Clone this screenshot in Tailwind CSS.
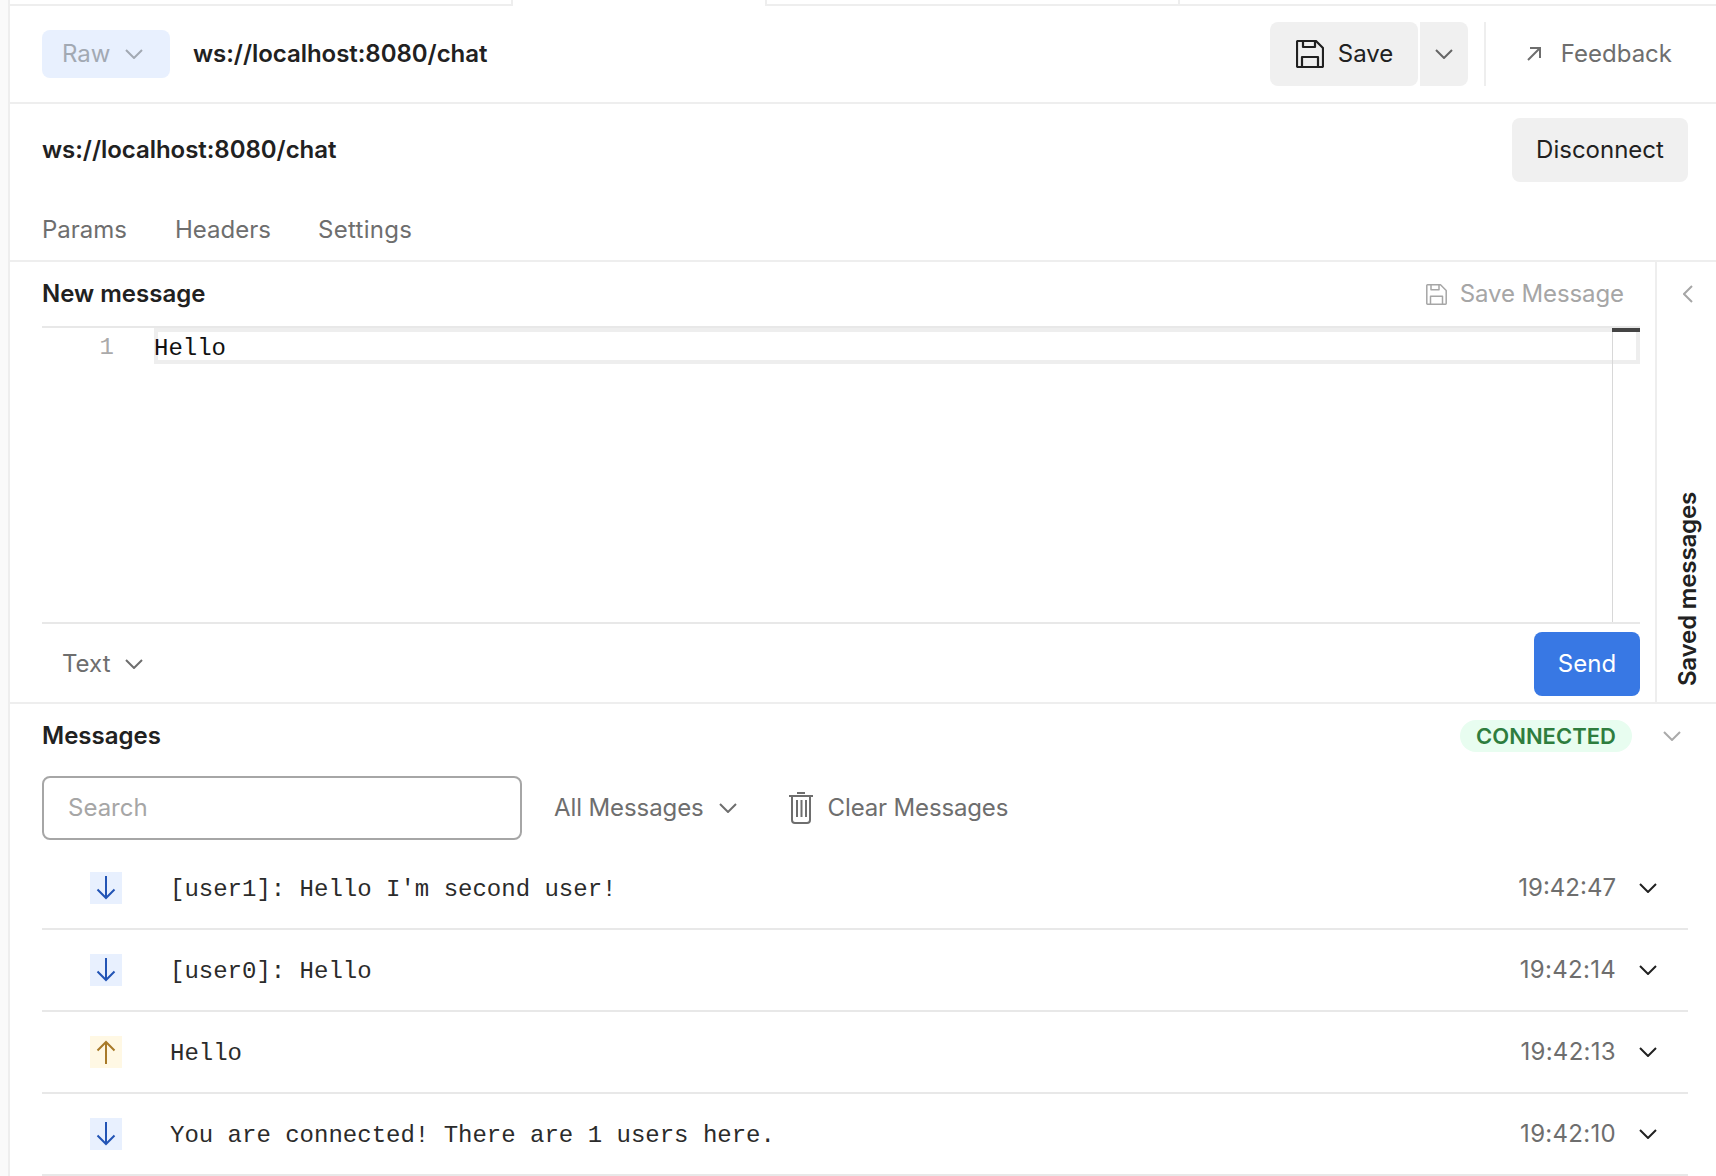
<!DOCTYPE html>
<html lang="en">
<head>
    <meta charset="UTF-8">
    <meta name="viewport" content="width=device-width, initial-scale=1.0">
    <script src="https://cdn.jsdelivr.net/npm/@tailwindcss/browser@4"></script>
    <title>WebSocket Request</title>
</head>
<body class="bg-white overflow-hidden">
    <div class="flex h-[1176px] w-[1716px] overflow-hidden font-['Inter',sans-serif] text-[24px] text-[#212121]">
        <!-- left rail -->
        <div class="w-[10px] shrink-0 bg-[#fafafa] border-r-2 border-[#eeeeee]"></div>

        <div class="flex-1 min-w-0 flex flex-col">
            <!-- tab strip -->
            <div class="flex h-[6px] shrink-0">
                <div class="w-[503px] border-b-2 border-r-2 border-[#eeeeee]"></div>
                <div class="w-[252px]"></div>
                <div class="w-[415px] border-b-2 border-l-2 border-r-2 border-[#eeeeee]"></div>
                <div class="flex-1 border-b-2 border-[#eeeeee]"></div>
            </div>

            <!-- request bar -->
            <div class="flex items-center h-[98px] shrink-0 pl-[32px] pr-[44px] border-b-2 border-[#eeeeee]">
                <button class="flex items-center gap-[15px] w-[128px] h-[48px] pl-[20px] rounded-[8px] bg-[#e8f0fe] text-[#a2a9b3]">
                    Raw
                    <svg class="w-[18px] h-[10px]" viewBox="0 0 18 10" fill="none" stroke="#a2a9b3" stroke-width="2"><path d="M1 1l8 8 8-8"/></svg>
                </button>
                <div class="ml-[23px] font-semibold tracking-[-0.04px]">ws://localhost:8080/chat</div>
                <div class="ml-auto flex items-center h-[64px]">
                    <button class="flex items-center gap-[14px] w-[148px] h-full pl-[26px] rounded-[8px] bg-[#f0f0f0]">
                        <svg class="w-[28px] h-[28px]" viewBox="0 0 28 28" fill="none" stroke="#212121" stroke-width="2.200" stroke-linejoin="round"><path d="M2 1h18l7 7v18a1 1 0 0 1-1 1H2a1 1 0 0 1-1-1V2a1 1 0 0 1 1-1z"/><path d="M7 1v6h12V1"/><path d="M6 27V17h16v10"/></svg>
                        Save
                    </button>
                    <button class="flex items-center justify-center w-[48px] h-full ml-[2px] rounded-r-[8px] bg-[#f0f0f0]">
                        <svg class="w-[18px] h-[10px]" viewBox="0 0 18 10" fill="none" stroke="#666666" stroke-width="2"><path d="M1 1l8 8 8-8"/></svg>
                    </button>
                    <div class="w-[2px] h-full ml-[16px] bg-[#eeeeee]"></div>
                    <button class="flex items-center gap-[20px] ml-[41px] text-[#6e6e6e]">
                        <svg class="w-[14px] h-[14px]" viewBox="0 0 14 14" fill="none" stroke="#6e6e6e" stroke-width="2"><path d="M1 13L13 1M3 1h10v10"/></svg>
                        Feedback
                    </button>
                </div>
            </div>

            <!-- url + tabs -->
            <div class="h-[158px] shrink-0 px-[32px] pr-[28px] pt-[14px] border-b-2 border-[#eeeeee]">
                <div class="flex items-center justify-between h-[64px]">
                    <div class="font-semibold tracking-[-0.04px]">ws://localhost:8080/chat</div>
                    <button class="w-[176px] h-[64px] rounded-[8px] bg-[#f0f0f0]">Disconnect</button>
                </div>
                <div class="flex mt-[32px] leading-[32px] text-[#6e6e6e]">
                    <span>Params</span>
                    <span class="ml-[48px]">Headers</span>
                    <span class="ml-[47px] tracking-[0.3px]">Settings</span>
                </div>
            </div>

            <!-- new message -->
            <div class="flex h-[442px] shrink-0 border-b-2 border-[#eeeeee]">
                <div class="flex-1 min-w-0 flex flex-col pl-[32px] pr-[15px]">
                    <div class="flex items-center justify-between h-[64px] shrink-0 pr-[16px]">
                        <div class="font-semibold">New message</div>
                        <div class="flex items-center gap-[13px] text-[#a6a6a6] tracking-[-0.1px]">
                            <svg class="w-[21px] h-[21px]" viewBox="0 0 21 21" fill="none" stroke="#a6a6a6" stroke-width="1.5" stroke-linejoin="round"><path d="M1.5.8h13l5.700 5.700v13a.7.7 0 0 1-.7.7H1.500a.7.7 0 0 1-.7-.7V1.500a.7.7 0 0 1 .7-.7z"/><path d="M5 .8v5h8v-5"/><path d="M4.500 20.200v-8h12v8"/></svg>
                            Save Message
                        </div>
                    </div>
                    <!-- editor -->
                    <div class="relative flex-1 flex border-t-2 border-b-2 border-[#e8e8e8] font-['Liberation_Mono',monospace]">
                        <div class="absolute left-[112px] right-0 top-0 h-[36px] border-4 border-[#eeeeee]"></div>
                        <div class="absolute right-[27px] top-0 bottom-0 w-px bg-[#d8d8d8]"></div>
                        <div class="absolute right-0 top-0 w-[28px] h-[4px] bg-[#444444]"></div>
                        <div class="relative w-[72px] text-right leading-[36px] text-[#aaaaaa] mt-[2px]">1</div>
                        <div class="relative ml-[40px] leading-[36px] text-[#111111] mt-[3px]">Hello</div>
                    </div>
                    <div class="flex items-start justify-between h-[78px] shrink-0 pt-[8px]">
                        <button class="flex items-center gap-[14px] h-[64px] pl-[20px] text-[#6e6e6e]">
                            Text
                            <svg class="w-[18px] h-[10px]" viewBox="0 0 18 10" fill="none" stroke="#6e6e6e" stroke-width="2"><path d="M1 1l8 8 8-8"/></svg>
                        </button>
                        <button class="w-[106px] h-[64px] rounded-[8px] bg-[#3878e4] text-white">Send</button>
                    </div>
                </div>
                <!-- saved messages rail -->
                <div class="w-[61px] shrink-0 flex flex-col items-center border-l-2 border-[#eeeeee] pl-[3px] pb-[16px]">
                    <svg class="w-[10px] h-[18px] mt-[23px]" viewBox="0 0 10 18" fill="none" stroke="#a6a6a6" stroke-width="2"><path d="M9 1L1 9l8 8"/></svg>
                    <div class="mt-auto font-semibold leading-[28px] tracking-[-0.15px] [writing-mode:vertical-rl] rotate-180">Saved messages</div>
                </div>
            </div>

            <!-- messages -->
            <div class="flex-1 min-h-0 pl-[32px] pr-[28px]">
                <div class="flex items-center h-[64px]">
                    <div class="font-semibold">Messages</div>
                    <div class="ml-auto flex items-center justify-center w-[172px] h-[32px] rounded-full bg-[#e8fdf0] text-[#2e7d3e] text-[22px] font-semibold">CONNECTED</div>
                    <svg class="w-[18px] h-[10px] ml-[31px] mr-[7px]" viewBox="0 0 18 10" fill="none" stroke="#aaaaaa" stroke-width="2"><path d="M1 1l8 8 8-8"/></svg>
                </div>
                <div class="flex items-center h-[64px] mt-[8px]">
                    <div class="flex items-center w-[480px] h-[64px] pl-[24px] border-2 border-[#a6a6a6] rounded-[8px] text-[#a6a6a6]">Search</div>
                    <button class="flex items-center gap-[15px] ml-[32px] text-[#6e6e6e] tracking-[-0.1px]">
                        All Messages
                        <svg class="w-[18px] h-[10px]" viewBox="0 0 18 10" fill="none" stroke="#6e6e6e" stroke-width="2"><path d="M1 1l8 8 8-8"/></svg>
                    </button>
                    <button class="flex items-center gap-[15px] ml-[52px] text-[#6e6e6e] tracking-[-0.15px]">
                        <svg class="w-[24px] h-[32px]" viewBox="0 0 24 32" fill="none" stroke="#6e6e6e" stroke-width="2" stroke-linecap="butt"><path d="M8 1h8M0 4h24"/><path d="M3 4v24a3 3 0 0 0 3 3h12a3 3 0 0 0 3-3V4"/><path d="M8 8v17M12.500 8v17M17 8v17"/></svg>
                        Clear Messages
                    </button>
                </div>

                <div class="mt-[8px]">
                    <div class="flex items-center h-[82px] pl-[48px] border-b-2 border-[#e8e8e8]">
                        <div class="flex items-center justify-center w-[32px] h-[32px] bg-[#e8f0fe]">
                            <svg class="w-[20px] h-[24px]" viewBox="0 0 20 24" fill="none" stroke="#2254b5" stroke-width="2"><path d="M10 0v22M1.500 13.500L10 22l8.500-8.500"/></svg>
                        </div>
                        <div class="ml-[48px] pt-[3px] font-['Liberation_Mono',monospace] text-[#2b2b2b]">[user1]: Hello I'm second user!</div>
                        <div class="ml-auto text-[#6e6e6e]">19:42:47</div>
                        <svg class="w-[18px] h-[10px] ml-[23px] mr-[31px]" viewBox="0 0 18 10" fill="none" stroke="#212121" stroke-width="2"><path d="M1 1l8 8 8-8"/></svg>
                    </div>
                    <div class="flex items-center h-[82px] pl-[48px] border-b-2 border-[#e8e8e8]">
                        <div class="flex items-center justify-center w-[32px] h-[32px] bg-[#e8f0fe]">
                            <svg class="w-[20px] h-[24px]" viewBox="0 0 20 24" fill="none" stroke="#2254b5" stroke-width="2"><path d="M10 0v22M1.500 13.500L10 22l8.500-8.500"/></svg>
                        </div>
                        <div class="ml-[48px] pt-[3px] font-['Liberation_Mono',monospace] text-[#2b2b2b]">[user0]: Hello</div>
                        <div class="ml-auto text-[#6e6e6e] tracking-[0.3px]">19:42:14</div>
                        <svg class="w-[18px] h-[10px] ml-[23px] mr-[31px]" viewBox="0 0 18 10" fill="none" stroke="#212121" stroke-width="2"><path d="M1 1l8 8 8-8"/></svg>
                    </div>
                    <div class="flex items-center h-[82px] pl-[48px] border-b-2 border-[#e8e8e8]">
                        <div class="flex items-center justify-center w-[32px] h-[32px] bg-[#fff8e4]">
                            <svg class="w-[20px] h-[24px]" viewBox="0 0 20 24" fill="none" stroke="#a87a28" stroke-width="2"><path d="M10 24V2M1.500 10.500L10 2l8.500 8.500"/></svg>
                        </div>
                        <div class="ml-[48px] pt-[3px] font-['Liberation_Mono',monospace] text-[#2b2b2b]">Hello</div>
                        <div class="ml-auto text-[#6e6e6e] tracking-[0.3px]">19:42:13</div>
                        <svg class="w-[18px] h-[10px] ml-[23px] mr-[31px]" viewBox="0 0 18 10" fill="none" stroke="#212121" stroke-width="2"><path d="M1 1l8 8 8-8"/></svg>
                    </div>
                    <div class="flex items-center h-[82px] pl-[48px] border-b-2 border-[#e8e8e8]">
                        <div class="flex items-center justify-center w-[32px] h-[32px] bg-[#e8f0fe]">
                            <svg class="w-[20px] h-[24px]" viewBox="0 0 20 24" fill="none" stroke="#2254b5" stroke-width="2"><path d="M10 0v22M1.500 13.500L10 22l8.500-8.500"/></svg>
                        </div>
                        <div class="ml-[48px] pt-[3px] font-['Liberation_Mono',monospace] text-[#2b2b2b]">You are connected! There are 1 users here.</div>
                        <div class="ml-auto text-[#6e6e6e] tracking-[0.3px]">19:42:10</div>
                        <svg class="w-[18px] h-[10px] ml-[23px] mr-[31px]" viewBox="0 0 18 10" fill="none" stroke="#212121" stroke-width="2"><path d="M1 1l8 8 8-8"/></svg>
                    </div>
                </div>
            </div>
        </div>
    </div>
</body>
</html>
